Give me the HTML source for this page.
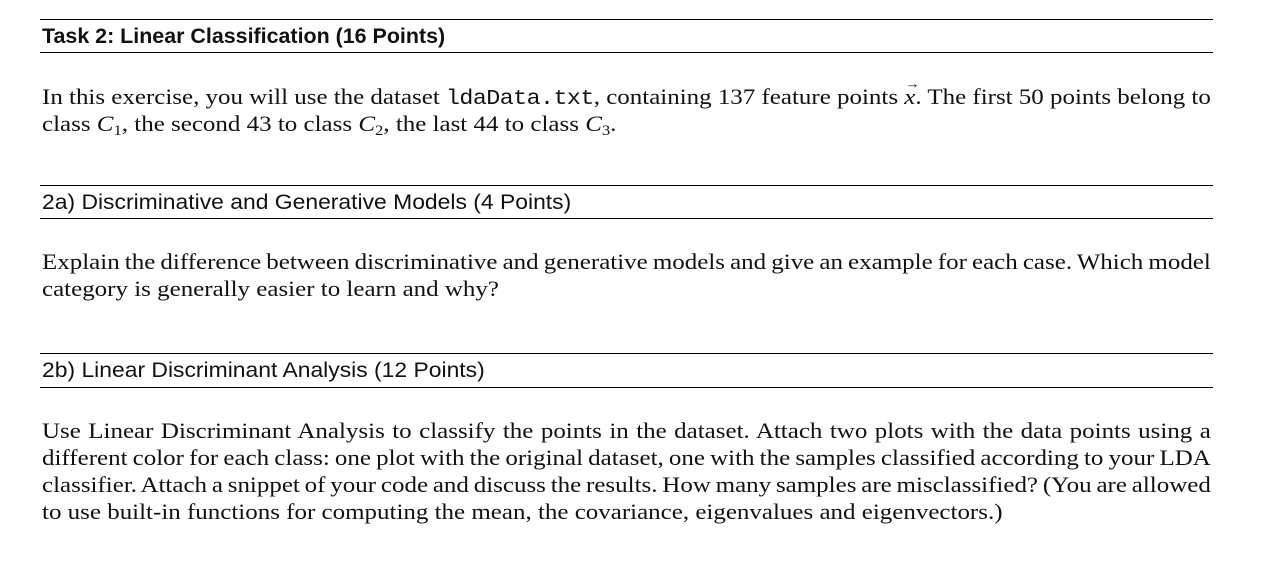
<!DOCTYPE html>
<html><head><meta charset="utf-8"><style>
body{margin:0;background:#fff;width:1267px;height:580px;position:relative;overflow:hidden;color:#111}
.rule{position:absolute;left:40px;width:1173px;height:1px;background:#000}
.h{position:absolute;left:42px;font-family:"Liberation Sans",sans-serif;font-size:21px;transform-origin:0 50%;white-space:nowrap;line-height:24px}
.l{position:absolute;left:42px;width:1053px;font-family:"Liberation Serif",serif;font-size:22.5px;line-height:27px;white-space:nowrap;text-align:justify;text-align-last:justify;transform-origin:0 0;transform:scaleX(1.11);word-spacing:-4px}
.l.last{text-align-last:left;word-spacing:0}
.m{font-family:"Liberation Mono",monospace;font-size:21px;letter-spacing:-0.5px}
i{font-style:italic}
sub{font-size:15px;vertical-align:-4px;line-height:0}
.vec{position:relative;display:inline-block}
.vec b{position:absolute;left:1px;top:-13px;font-weight:normal;font-size:13px;font-style:normal}
</style></head><body>
<div class="rule" style="top:19px"></div>
<div class="h" style="top:25px;font-weight:bold;transform:scaleX(1.02)">Task 2: Linear Classification (16 Points)</div>
<div class="rule" style="top:52px"></div>
<div class="l" style="top:83px">In this exercise, you will use the dataset <span class="m">ldaData.txt</span>, containing 137 feature points <span class="vec"><i>x</i><b>→</b></span>. The first 50 points belong to</div>
<div class="l last" style="top:110px">class <i>C</i><sub>1</sub>, the second 43 to class <i>C</i><sub>2</sub>, the last 44 to class <i>C</i><sub>3</sub>.</div>

<div class="rule" style="top:185px"></div>
<div class="h" style="top:191px;transform:scaleX(1.09)">2a) Discriminative and Generative Models (4 Points)</div>
<div class="rule" style="top:218px"></div>
<div class="l" style="top:248px">Explain the difference between discriminative and generative models and give an example for each case. Which model</div>
<div class="l last" style="top:275px">category is generally easier to learn and why?</div>

<div class="rule" style="top:353px"></div>
<div class="h" style="top:359px;transform:scaleX(1.09)">2b) Linear Discriminant Analysis (12 Points)</div>
<div class="rule" style="top:387px"></div>
<div class="l" style="top:417px">Use Linear Discriminant Analysis to classify the points in the dataset. Attach two plots with the data points using a</div>
<div class="l" style="top:444px">different color for each class: one plot with the original dataset, one with the samples classified according to your LDA</div>
<div class="l" style="top:471px">classifier. Attach a snippet of your code and discuss the results. How many samples are misclassified? (You are allowed</div>
<div class="l last" style="top:498px">to use built-in functions for computing the mean, the covariance, eigenvalues and eigenvectors.)</div>
</body></html>
